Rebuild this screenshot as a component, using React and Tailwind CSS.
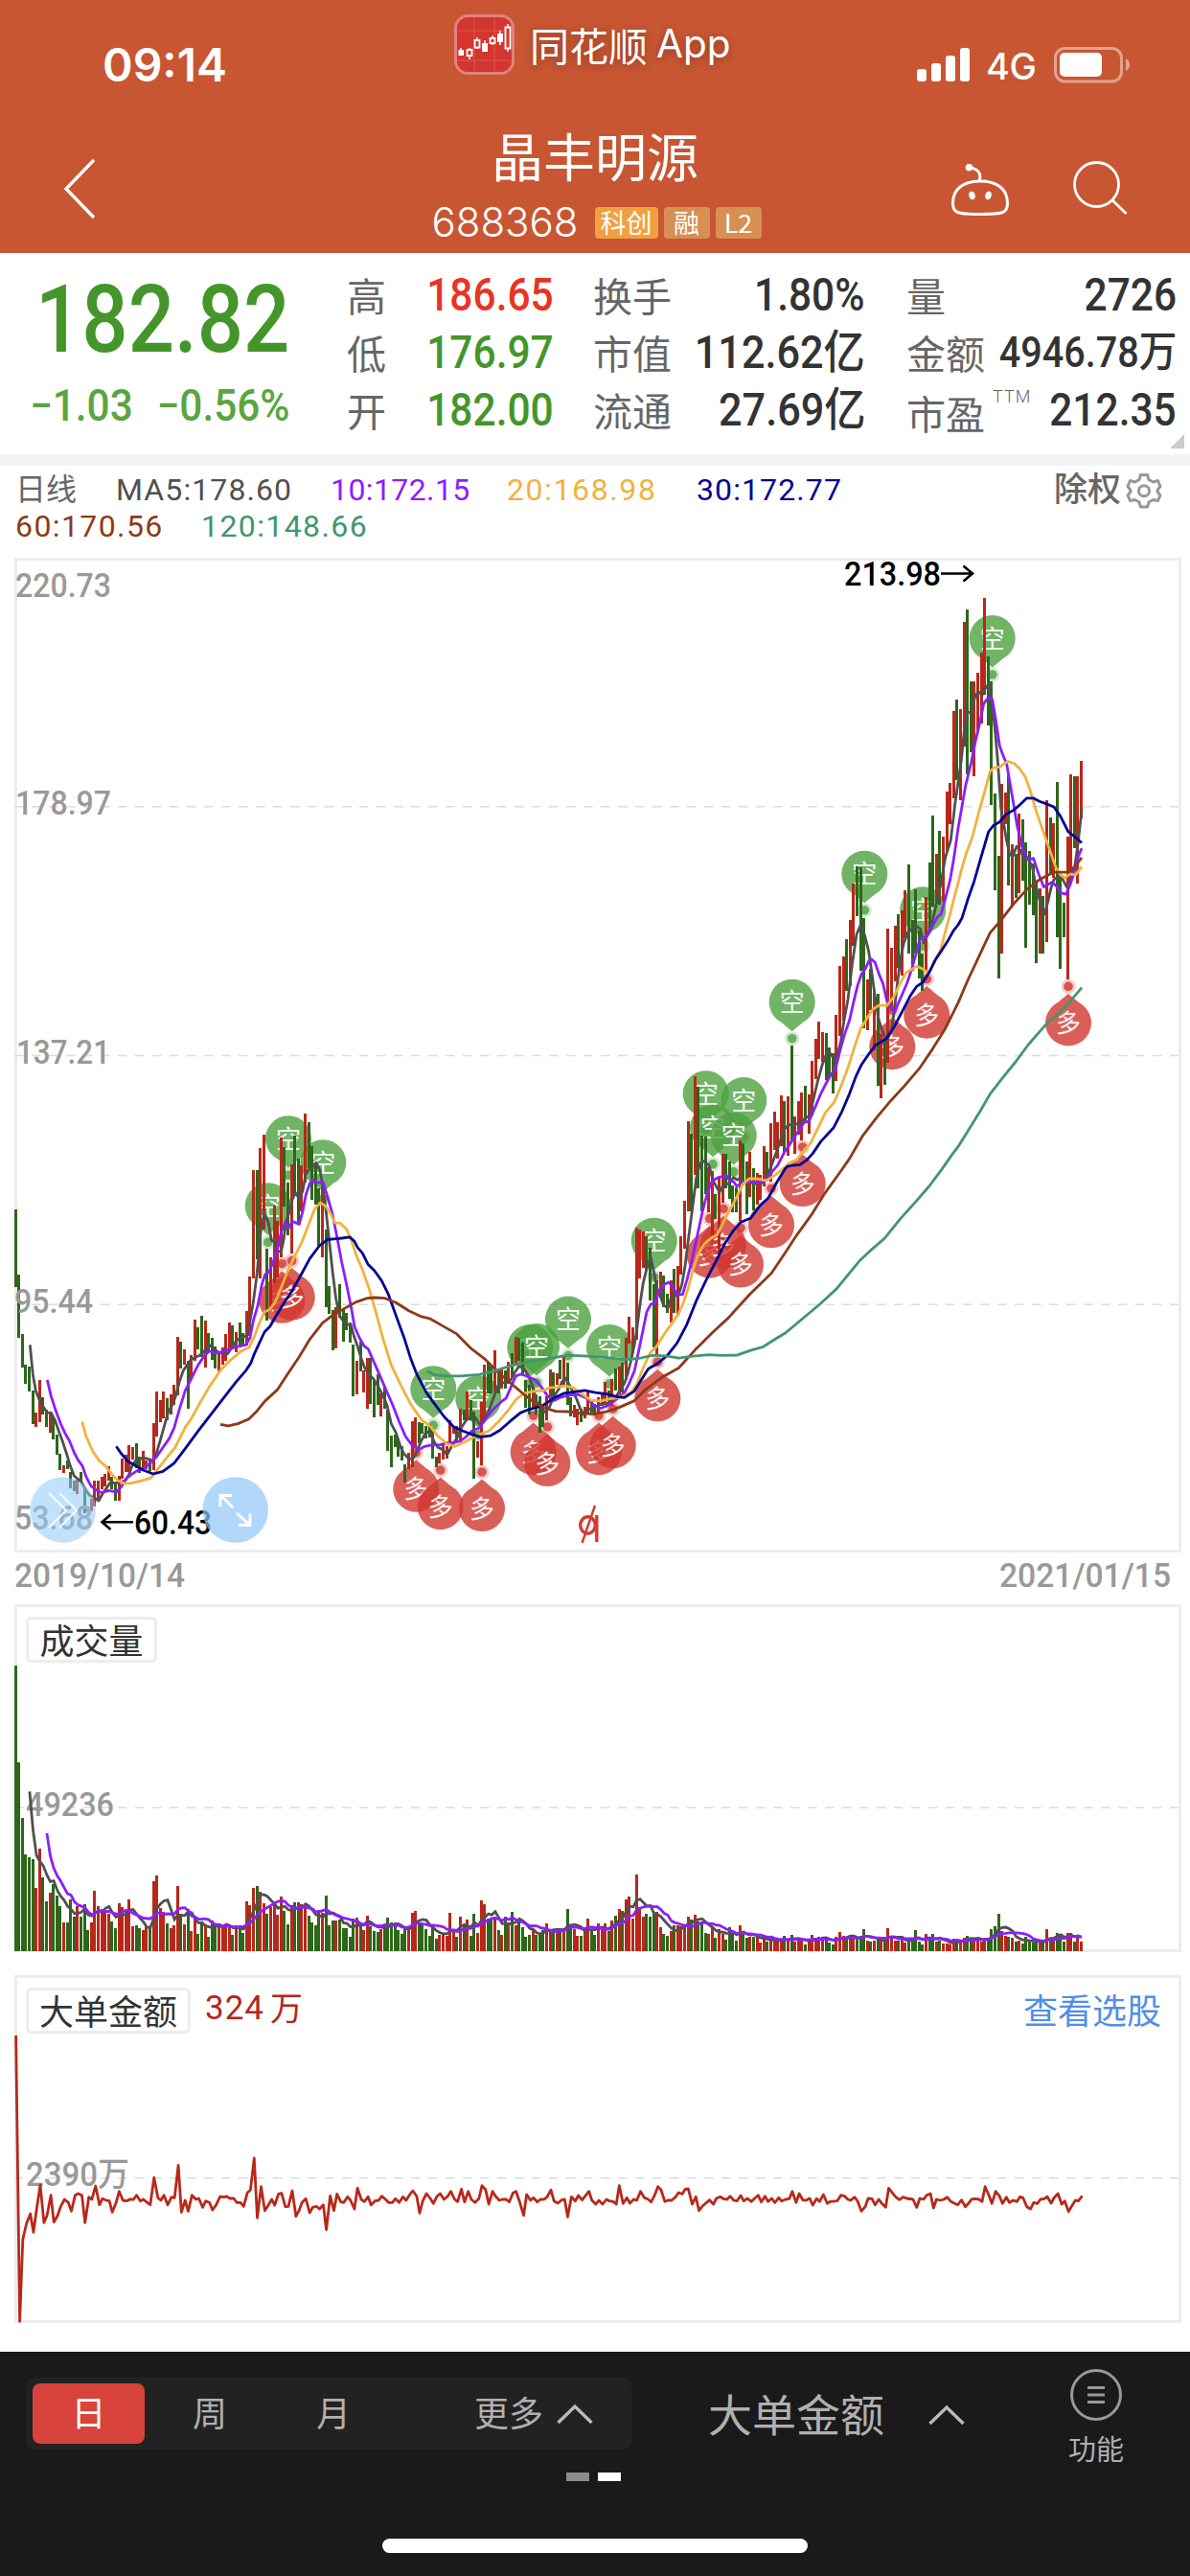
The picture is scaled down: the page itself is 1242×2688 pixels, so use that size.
import React from "react";

const CJK = "font-['Noto_Sans_CJK_SC',sans-serif]";
const DIN = "font-[Roboto,'Noto_Sans_CJK_SC',sans-serif]";
const RED = "#b8281a";
const GREEN = "#2c671a";
const STEP = 3.6;

// Each price segment: vertical origin, vertical scale, then colour + high,low per session.
const PRICE_SEGMENTS = [
  [1080, 2.6133, `g476,686 g653,826 g815,907 g899,950 g905,971 g969,1061 r1030,1069 r941,1057 g988,1034 g1022,1069
  r1030,1085 g1040,1103 g1090,1144 g1142,1186 r1173,1193 g1160,1184 g1192,1235 g1215,1243 r1213,1251 g1192,1220
  g1240,1303 g1285,1300 r1265,1300 r1215,1285 r1215,1265 r1205,1238 r1197,1230 r1177,1215 g1205,1240 g1222,1269
  r1202,1270 r1155,1210 r1145,1192 r1119,1192 r1124,1158 g1113,1180 g1150,1193 r1134,1180 r1160,1185 g1160,1188
  r1058,1186 r972,1095 r996,1055 r972,1045 g990,1050 r980,1034 r954,1010 r823,983 g836,909 r857,898
  g889,1018 r873,940 r776,889 g797,857 g766,878 r779,907 g813,865 g826,885 g850,909 r870,918
  r853,899 r815,889 r784,860 g792,852 r810,866 g784,853 g813,850 r753,848 r659,820 r368,664
  g368,612 r308,664 r272,530 g583,779 r605,750 r465,677 r507,661 r280,605 g306,468 g402,546
  r353,597 g274,440 g337,515 r355,480 r214,402 g238,363 g303,449 g350,463 g418,576 r410,606
  g530,742 g685,760 g750,860 r742,855 g679,770 g750,836 g758,805 g790,839 g844,985 r889,980
  g836,917 r915,975 r881,1019 g881,1007 g940,1043 g925,1009 r978,1040 g960,1019 g1023,1134 g1092,1179
  g1090,1124 g1100,1150 g1120,1160 g1171,1220 r1139,1185 r1052,1179 r1043,1124 g1056,1113 g1058,1087 g1065,1100
  g1060,1098 g1075,1155 g1150,1179 r1139,1168 r1115,1158 r1120,1155 r1050,1115 r1065,1087 g1065,1110 r1019,1110
  g1021,1050 r972,1047 g996,1050 g1027,1210 r1107,1152 r1001,1173 r899,1055 g892,977 g905,977 r860,972
  g915,977 r912,964 g915,964 r891,950 g868,935 r823,898 g826,889 g839,927 g940,1017 g955,1034
  r958,1015 g980,1034 g985,1085 g1005,1069 r985,1051 r912,1000 g920,995 r922,955 g886,938 r878,960
  g894,1008 g988,1040 r1009,1042 r1020,1064 g1020,1057 r1015,1045 r975,1034 g995,1030 g1005,1033 r988,1030
  r980,1012 r946,1005 g970,1000 r938,1012 g909,970 r903,980 g894,974 r826,940 r768,841 r797,868
  r525,830 r530,664 r536,635 g549,640 g580,724 g679,852 r668,870 r645,715 g656,742 g706,758
  r669,784 g638,758 r630,766 r549,653 r452,583 r235,481 g269,480 r112,382 g141,418 g274,480
  g277,434 r360,484 r371,546 g434,502 r390,610 r324,457 g324,418 g345,447 g410,483 g415,483
  r287,507 g294,410 g345,489 r319,442 g363,478 r376,463 r382,450 r303,413 g319,395 r240,400
  r209,314 r238,337 r165,303 g180,319`],
  [800, 2.8, `r963,1137 g815,1095 r1022,1131 r977,1075 r952,1092 g932,1035 r958,1072 r860,1020 r795,913 r745,854
  r776,862 g778,915 g820,910 g837,955 r725,918 r582,788 r554,742 g504,655 r448,640 r342,524
  g291,437 g293,596 g442,764 r622,769 g590,710 r660,830 g664,932 r780,969 g800,930 r473,865
  r529,715 r465,627 g431,588 r420,610 r361,500 g286,546 g448,595 g358,545 g480,618 g546,655
  r381,600 g280,475 g143,410 r255,400 g188,402 r204,395 r72,245 r48,168`],
  [560, 2.6133, `r476,713 g444,665 r470,719 r233,572 g199,648 g395,588 r395,653 r371,536 r316,510 r167,430
  g327,515 g395,732 g700,964 g870,1204 r674,1137 r698,785 g650,950 r839,1010 g865,985 r755,972
  g770,938 g834,1120 g857,1003 g890,1032 g940,1162 r960,1137 g980,1137 r719,1105 g766,920 r781,930
  g669,1092 g920,1178 g998,1092 r818,1207 r648,940 g653,850 r653,946 r612,768`],
];

const candles = PRICE_SEGMENTS.flatMap(([oy, sy, data]) =>
  data.trim().split(/\s+/).map((t) => {
    const [hi, lo] = t.slice(1).split(",").map(Number);
    return { up: t[0] === "r", top: oy + hi / sy, bottom: oy + lo / sy };
  })
).map((c, i) => ({ ...c, x: 15 + Math.floor(STEP * i + 1e-6) }));

// Plot frames: horizontal origin, vertical origin, vertical scale.
const FRAMES = { a: [0, 1080, 2.6133], b: [400, 1080, 2.6133], c: [640, 800, 2.8], d: [840, 560, 2.6133] };

function toPoints(parts) {
  return parts
    .map(([key, s]) => {
      const [ox, oy, sy] = FRAMES[key];
      return s
        .trim()
        .split(/,\s*/)
        .map((p) => {
          const [x, y] = p.trim().split(" ").map(Number);
          return `${(ox + x / 3).toFixed(1)},${(oy + y / sy).toFixed(1)}`;
        })
        .join(" ");
    })
    .join(" ");
}

const AVERAGES = [
  { color: "#505050", parts: [
    ["a", "94 845, 103 925, 112 970, 121 990, 134 1012, 148 1030, 160 1030, 172 1050, 184 1080, 196 1108, 208 1140, 220 1175, 232 1202, 245 1212, 257 1222, 268 1240, 280 1255, 294 1262, 309 1270, 322 1250, 334 1235, 346 1220, 360 1222, 376 1220, 392 1215, 403 1200, 415 1172, 427 1158, 440 1155, 457 1154, 470 1158, 480 1160, 490 1140, 502 1105, 514 1068, 526 1030, 540 1008, 550 985, 562 945, 574 915, 586 900, 598 885, 610 880, 622 875, 634 868, 655 845, 668 855, 685 866, 700 868, 712 870, 724 855, 739 835, 755 824, 772 820, 781 790, 793 730, 805 650, 817 530, 829 488, 840 510, 850 560, 862 565, 870 588, 880 592, 888 560, 895 510, 905 485, 915 450, 925 430, 937 446, 948 425, 957 380, 967 368, 980 358, 990 348, 1002 370, 1012 420, 1022 490, 1032 570, 1042 650, 1052 720, 1063 765, 1075 780, 1085 790, 1098 788, 1108 820, 1120 850, 1130 880, 1142 908, 1155 925, 1170 938, 1185 960, 1200 985, 1212 1010, 1225 1060, 1240 1085, 1255 1125, 1265 1142, 1280 1155, 1290 1157, 1300 1147"],
    ["b", "110 1125, 120 1105, 135 1080, 150 1090, 160 1110, 172 1125, 185 1130, 200 1145, 215 1120, 230 1100, 245 1070, 260 1050, 275 1042, 288 1043, 300 1060, 315 1055, 330 1025, 345 990, 358 960, 370 948, 385 948, 400 940, 412 920, 424 905, 436 904, 448 920, 460 940, 470 965, 480 1000, 490 1018, 505 1028, 520 1015, 535 985, 550 965, 560 945, 570 935, 580 950, 592 970, 605 992, 617 1020, 628 1035, 640 1022, 655 1018, 670 1012, 685 1005, 700 1005, 715 1000, 727 990, 740 970, 755 950, 765 925, 775 890, 785 850, 793 810, 803 740, 813 680, 824 640, 837 605, 847 645, 857 690, 867 710, 878 738, 892 743, 900 720, 912 712, 925 708, 935 680, 945 630, 955 560, 967 480, 980 390, 992 350, 1005 344, 1020 356, 1032 395, 1042 412, 1053 428, 1063 412, 1075 408, 1087 400, 1097 388, 1107 395, 1117 392, 1130 403, 1145 400, 1160 405, 1172 405, 1190 403, 1205 380, 1220 345, 1235 310, 1248 275, 1257 255"],
    ["c", "550 1047, 565 1045, 580 1043, 600 1028, 613 1020, 625 980, 640 920, 655 870, 668 838, 680 838, 693 856, 703 840, 713 800, 722 745, 735 680, 748 580, 762 490, 775 462, 788 495, 800 540, 808 590, 818 660, 830 735, 840 765, 855 800, 870 775, 880 715, 890 630, 900 560, 910 515, 922 485, 935 475, 950 466, 962 475, 972 514, 985 492, 1000 450, 1012 400, 1025 345, 1040 265, 1057 215, 1070 110, 1080 45"],
    ["d", "490 610, 500 520, 510 480, 522 478, 533 435, 543 422, 555 432, 566 412, 576 402, 585 440, 595 520, 604 610, 614 740, 622 780, 632 830, 642 868, 652 870, 663 845, 675 855, 688 880, 700 880, 712 900, 722 945, 735 990, 750 1030, 760 1000, 770 960, 780 935, 795 925, 808 935, 820 955, 832 940, 845 900, 855 840, 867 743"],
  ] },
  { color: "#8c1eff", parts: [
    ["a", "148 940, 160 985, 175 1025, 190 1060, 205 1088, 218 1108, 232 1138, 245 1160, 258 1175, 270 1205, 285 1230, 300 1240, 318 1248, 340 1242, 365 1246, 380 1232, 395 1210, 412 1198, 430 1188, 450 1182, 470 1168, 490 1150, 510 1125, 530 1100, 545 1072, 562 1020, 580 970, 600 935, 620 900, 640 875, 655 862, 680 868, 700 862, 720 856, 740 850, 770 845, 783 825, 793 780, 808 735, 820 680, 830 653, 843 645, 855 620, 870 580, 880 540, 892 512, 905 525, 915 508, 937 516, 948 480, 958 435, 970 405, 980 395, 992 403, 1012 402, 1025 440, 1040 485, 1055 550, 1070 620, 1085 680, 1100 745, 1110 795, 1125 825, 1140 848, 1153 856, 1170 890, 1190 930, 1210 970, 1230 1010, 1250 1055, 1270 1095, 1290 1118"],
    ["b", "112 1130, 130 1122, 150 1118, 175 1118, 200 1112, 220 1112, 240 1108, 260 1095, 280 1078, 300 1072, 320 1048, 345 1020, 370 1000, 385 990, 400 960, 415 930, 430 925, 450 930, 475 940, 495 960, 515 985, 535 997, 555 988, 580 982, 610 980, 640 992, 660 1010, 680 1018, 705 1010, 735 990, 755 975, 770 950, 787 915, 800 860, 812 810, 825 755, 837 735, 850 730, 865 700, 880 680, 893 674, 905 685, 920 708, 937 708, 950 670, 965 620, 980 560, 1000 480, 1015 430, 1030 398, 1050 388, 1075 383, 1085 398, 1097 400, 1107 412, 1125 402, 1150 400, 1190 402, 1205 390, 1220 370, 1235 355, 1257 318"],
    ["c", "550 1108, 565 1085, 580 1065, 597 1040, 613 1036, 630 1000, 650 955, 675 910, 697 880, 710 830, 725 780, 740 740, 752 690, 765 640, 778 605, 790 590, 800 568, 808 562, 820 572, 832 605, 845 635, 857 685, 870 705, 882 715, 893 690, 905 665, 920 632, 935 590, 950 540, 960 505, 975 500, 990 485, 1003 460, 1015 440, 1027 430, 1040 385, 1055 330, 1067 265, 1080 180"],
    ["d", "492 735, 503 680, 520 620, 535 555, 550 500, 560 455, 575 438, 587 445, 598 500, 610 570, 620 595, 632 620, 640 660, 652 720, 665 790, 680 845, 692 870, 703 880, 716 877, 730 915, 748 955, 762 948, 775 942, 790 955, 803 972, 818 975, 830 950, 842 920, 855 875, 867 850"],
  ] },
  { color: "#f1b23e", parts: [
    ["a", "257 1055, 270 1095, 290 1135, 310 1160, 330 1175, 350 1198, 370 1215, 390 1223, 410 1222, 440 1216, 472 1208, 490 1188, 520 1155, 548 1125, 580 1070, 600 1045, 625 1005, 655 960, 690 915, 720 888, 755 862, 780 852, 795 825, 810 790, 828 755, 845 748, 862 728, 880 690, 900 645, 920 608, 945 565, 965 520, 985 475, 1003 457, 1020 467, 1035 487, 1048 512, 1065 513, 1085 530, 1100 560, 1115 600, 1135 640, 1155 690, 1175 750, 1200 830, 1225 900, 1255 955, 1285 1005, 1320 1050"],
    ["b", "145 1065, 170 1093, 200 1115, 225 1122, 250 1112, 275 1100, 300 1090, 330 1080, 360 1055, 390 1025, 415 995, 440 977, 470 972, 500 970, 520 962, 545 960, 570 957, 595 962, 620 978, 650 996, 680 998, 710 992, 740 988, 775 975, 795 950, 815 905, 835 868, 855 850, 880 815, 905 785, 925 760, 940 730, 955 690, 970 640, 985 600, 1005 570, 1025 555, 1045 545, 1060 520, 1080 485, 1105 445, 1125 408, 1145 392, 1170 392, 1200 397, 1230 380, 1258 360"],
    ["c", "550 1158, 575 1148, 600 1118, 618 1100, 640 1058, 665 1010, 692 980, 715 930, 735 880, 755 820, 775 765, 795 735, 812 710, 832 697, 857 698, 880 670, 900 630, 917 602, 935 592, 952 583, 967 590, 980 598, 990 598, 1005 570, 1025 535, 1042 475, 1055 430, 1067 385, 1080 340"],
    ["d", "490 910, 505 865, 525 818, 545 750, 565 690, 580 640, 592 630, 610 628, 625 618, 637 613, 655 618, 672 632, 690 655, 705 690, 725 750, 745 800, 765 850, 785 900, 800 922, 815 930, 830 920, 848 922, 867 900"],
  ] },
  { color: "#060694", parts: [
    ["a", "364 1122, 380 1142, 400 1162, 425 1175, 450 1187, 480 1197, 510 1190, 545 1168, 580 1128, 620 1080, 660 1035, 700 990, 740 945, 770 915, 785 895, 797 868, 812 840, 828 810, 845 795, 865 765, 890 730, 915 697, 945 650, 970 610, 1000 575, 1025 558, 1045 556, 1070 554, 1095 551, 1110 563, 1120 580, 1135 595, 1152 625, 1172 642, 1195 670, 1215 705, 1240 765, 1265 825, 1285 880, 1305 925, 1320 950"],
    ["b", "135 975, 160 1005, 190 1040, 220 1068, 250 1080, 280 1090, 305 1096, 335 1093, 365 1078, 395 1055, 430 1030, 460 1020, 500 1010, 535 990, 565 977, 600 973, 630 969, 665 975, 700 979, 730 986, 755 989, 785 972, 805 945, 830 910, 860 895, 890 873, 920 840, 950 790, 980 725, 1010 670, 1040 620, 1070 568, 1095 535, 1120 510, 1150 500, 1180 465, 1205 445, 1230 405, 1258 365"],
    ["c", "545 1168, 560 1165, 585 1163, 605 1150, 625 1130, 650 1095, 690 1055, 715 1010, 740 955, 760 905, 778 870, 800 840, 820 815, 855 795, 880 760, 905 715, 930 670, 950 642, 970 630, 990 600, 1010 562, 1030 535, 1050 505, 1065 480, 1080 462"],
    ["d", "492 1040, 510 990, 530 940, 550 880, 575 805, 590 788, 610 778, 630 757, 655 745, 675 730, 695 713, 715 713, 735 722, 755 728, 780 737, 800 762, 825 805, 845 818, 867 835"],
  ] },
  { color: "#8c3a18", parts: [
    ["a", "690 1062, 715 1066, 745 1060, 780 1047, 805 1025, 830 998, 868 968, 900 925, 935 880, 970 830, 1010 785, 1045 762, 1080 745, 1115 728, 1150 718, 1175 716, 1205 718, 1240 730, 1280 752, 1320 768"],
    ["b", "145 773, 185 793, 230 815, 275 855, 320 885, 360 920, 400 950, 440 980, 470 1000, 505 1017, 540 1026, 580 1027, 620 1032, 660 1034, 700 1027, 740 1015, 785 998, 820 968, 870 935, 925 908, 975 860, 1030 812, 1080 772, 1150 705, 1215 650, 1260 592"],
    ["c", "575 1368, 620 1310, 660 1250, 710 1185, 740 1145, 780 1080, 825 1025, 870 975, 910 935, 960 880, 1000 825, 1040 765, 1080 690"],
    ["d", "510 1210, 545 1145, 580 1080, 615 1045, 655 1000, 695 962, 735 935, 780 915, 825 915, 845 900, 867 875"],
  ] },
  { color: "#42966f", parts: [
    ["b", "137 916, 160 927, 200 930, 240 930, 300 926, 340 918, 400 902, 460 890, 520 882, 580 873, 640 876, 700 880, 760 885, 800 882, 845 873, 890 876, 925 881, 970 876, 1020 872, 1060 874, 1107 873, 1150 860, 1190 850, 1230 828, 1260 812"],
    ["c", "650 1568, 700 1525, 735 1485, 770 1445, 810 1410, 850 1378, 900 1320, 950 1268, 990 1225, 1030 1175, 1060 1135, 1080 1110"],
    ["d", "548 1568, 580 1520, 620 1475, 660 1432, 700 1385, 750 1335, 800 1295, 830 1268, 867 1230"],
  ] },
];

const SHORTS = [[301, 1188.3], [279.7, 1258.3], [337.3, 1213.2], [452.3, 1449.3], [499.3, 1459.2], [553.3, 1406], [560, 1405], [593, 1376.6], [636, 1406], [682.7, 1294.7], [736.7, 1141.2], [776.3, 1148.1], [744, 1176.8], [765.7, 1184.9], [826.7, 1045.7], [902.3, 911.8], [963.3, 949.3], [1035.7, 666]];
const LONGS = [[294.3, 1356.7], [304.7, 1353.6], [434.3, 1553.7], [459.7, 1572.1], [503, 1574], [556.7, 1515.1], [571.3, 1527], [625, 1515.1], [639.7, 1508.2], [686.3, 1459.2], [740.7, 1309.6], [755, 1299.3], [773, 1319.5], [805, 1278.2], [837.7, 1235], [931.3, 1092.1], [967.3, 1059.6], [1115, 1067.4]];

const VOLUME_TOPS = `234 537 711 825 834 840 930 807 897 972 945 918 954 987 1038 1038 966 1020 987 1020 981 1062 1038 939 987 1000 1005 1010 1035 1056
978 990 1005 966 1050 1047 1056 1062 1050 1055 909 891 993 1005 1041 1056 1047 924 1010 1044 996 1065 1020 1074 1038 1045 1083 1032 1045 1045
1050 1048 1052 1077 1047 1047 1071 972 984 930 924 942 978 1011 990 975 1014 957 1002 1044 984 975 975 981 985 1017 1038 1047 1000 1007
954 1047 1032 1032 1030 1056 1056 1083 1025 1023 1038 1062 1017 1050 1065 1068 1059 1044 1023 1038 1047 1062 1074 1060 1050 1008 1002 1040 1045 1059
1080 1047 1089 1077 1075 1080 1008 1068 1083 1020 1047 1029 1080 1011 1071 969 981 1025 1025 1020 1062 1077 1020 1038 1005 1047 1025 1053 1083 1077
1062 1077 1072 1062 1041 1068 1062 1068 1062 1056 996 1050 1059 1080 1080 1060 1026 1060 1077 1041 1062 1041 1065 1032 1017 996 1002 966 957 1026
888 990 1020 1011 1020 1008 1005 1053 1074 1080 1065 1047 1047 1050 1045 1020 1029 1014 1035 1035 1071 1074 1050 1086 1059 1074 1092 1053 1070 1095
1047 1075 1086 1083 1083 1080 1101 1090 1098 1090 1093 1098 1095 1080 1095 1077 1098 1090 1092 1107 1095 1077 1095 1083 1083 1090 1101 1107 1083 1068
1080 1085 1085 1085 1092 1080 1059 1095 1098 1095 1090 1092 1090 1056 1085 1095 1095 1090 1101 1095 1090 1062 1098 1107 1074 1092 1074 1098 1095 1104
1104 1107 1090 1095 1095 1086 1080 1085 1098 1088 1098 1088 1085 1059 1050 1011 1065 1080 1083 1086 1098 1095 1104 1083 1098 1101 1098 1101 1098 1059
1085 1092 1071 1075 1098 1071 1071 1098 1080 1098`.trim().split(/\s+/).map((t) => 1660 + Number(t) / 3);

function movingAverage(values, n) {
  const out = [];
  for (let i = n - 1; i < values.length; i++) {
    let sum = 0;
    for (let k = 0; k < n; k++) sum += values[i - k];
    out.push(`${(16.5 + STEP * i).toFixed(1)},${(sum / n).toFixed(1)}`);
  }
  return out.join(" ");
}

const AMOUNT = `21 222, 26 1117, 30 860, 35 810, 40 780, 44 838, 48 770, 53 690, 58 808, 62 785, 67 722, 71 806, 76 785, 80 757, 85 735, 90 745, 94 772, 99 722, 103 717, 108 722, 112 808, 117 728, 121 735, 126 693, 131 752, 135 733, 140 738, 144 740, 148 775, 153 745, 157 710, 162 738, 167 740, 171 735, 176 735, 180 722, 185 740, 189 735, 194 745, 198 752, 203 667, 208 730, 212 738, 216 722, 221 752, 226 728, 230 730, 235 628, 239 775, 244 738, 248 772, 253 722, 258 735, 262 732, 267 760, 271 740, 276 745, 280 768, 285 752, 290 726, 294 728, 299 726, 303 732, 308 732, 312 745, 317 745, 321 757, 326 714, 330 706, 335 606, 339 793, 344 695, 349 770, 353 755, 358 735, 362 753, 367 718, 371 716, 376 758, 380 757, 385 708, 390 788, 394 770, 398 745, 403 733, 408 777, 412 760, 417 757, 421 765, 426 752, 430 830, 435 724, 440 770, 444 718, 449 742, 453 745, 458 727, 462 738, 467 765, 471 700, 476 735, 480 742, 485 727, 489 752, 494 740, 499 738, 503 725, 508 735, 512 745, 517 745, 521 733, 526 745, 531 727, 535 738, 540 720, 544 708, 549 725, 553 778, 557 740, 562 717, 567 732, 571 748, 576 725, 580 717, 585 735, 590 725, 594 710, 599 735, 603 742, 608 703, 612 743, 617 710, 621 735, 626 745, 631 733, 635 692, 640 705, 644 750, 649 710, 653 725, 658 738, 662 735, 667 735, 671 743, 676 715, 680 710, 685 745, 690 785, 694 720, 699 738, 703 730, 708 743, 712 735, 717 735, 721 727, 726 706, 730 740, 735 747, 740 737, 744 735, 748 790, 753 727, 758 740, 762 723, 767 737, 771 725, 776 710, 780 738, 785 750, 789 738, 794 750, 799 735, 803 740, 808 742, 812 750, 816 692, 821 748, 826 730, 830 747, 835 735, 839 738, 844 710, 849 730, 853 733, 858 743, 862 725, 867 695, 871 705, 876 742, 880 738, 885 738, 890 728, 894 714, 899 718, 903 703, 907 702, 912 750, 917 727, 921 770, 926 755, 931 745, 935 737, 940 750, 944 732, 949 727, 953 733, 958 735, 962 725, 967 738, 971 740, 976 723, 980 740, 985 732, 990 742, 994 733, 999 722, 1003 743, 1008 725, 1012 742, 1017 732, 1021 745, 1026 730, 1030 740, 1035 735, 1040 733, 1044 710, 1049 745, 1053 717, 1058 737, 1062 738, 1067 732, 1071 753, 1076 733, 1080 742, 1085 720, 1090 748, 1094 742, 1103 740, 1108 722, 1113 725, 1117 735, 1121 738, 1126 728, 1130 740, 1135 772, 1140 758, 1144 732, 1149 733, 1153 752, 1158 735, 1162 748, 1167 760, 1171 700, 1176 715, 1180 727, 1185 736, 1190 728, 1195 732, 1203 735, 1208 760, 1212 732, 1217 735, 1221 722, 1226 717, 1230 762, 1234 735, 1239 738, 1244 735, 1248 728, 1253 742, 1258 748, 1262 752, 1267 737, 1272 758, 1276 748, 1280 735, 1285 733, 1290 735, 1294 742, 1298 695, 1303 722, 1307 748, 1312 710, 1317 725, 1321 748, 1326 728, 1330 745, 1335 738, 1340 742, 1344 727, 1348 730, 1353 758, 1358 765, 1362 745, 1367 748, 1371 735, 1376 733, 1380 727, 1385 747, 1389 730, 1394 717, 1399 750, 1403 740, 1408 773, 1412 757, 1417 738, 1421 740, 1426 724`
  .split(", ")
  .map((p) => {
    const [x, y] = p.split(" ").map(Number);
    return `${(x / 1.2625).toFixed(1)},${(2050 + y / 3).toFixed(1)}`;
  })
  .join(" ");

function Panel({ top, bottom }) {
  return <rect x="16.5" y={top + 1.5} width="1215" height={bottom - top - 3} fill="none" stroke="#ededed" strokeWidth="3" />;
}

function Grid({ y }) {
  return <line x1="15" x2="1230" y1={y} y2={y} stroke="#dcdcdc" strokeWidth="1.5" strokeDasharray="9.5 8.5" />;
}

function Label({ x, y, w, children, size = 35, fill = "#999", weight = 500 }) {
  return (
    <text x={x} y={y} textLength={w} lengthAdjust="spacingAndGlyphs" fontSize={size} fill={fill} fontWeight={weight} fontFamily="Roboto, 'Noto Sans CJK SC', sans-serif">
      {children}
    </text>
  );
}

function Marker({ x, y, short }) {
  const color = short ? "#4ea240" : "#d23830";
  const d = short ? 1 : -1;
  const edge = y + d * 21.3;
  return (
    <g>
      <g opacity="0.8" fill={color}>
        <path d={`M${x - 11} ${edge}L${x} ${y + d * 30.5}L${x + 11} ${edge}A24 24 0 1 ${short ? 0 : 1} ${x - 11} ${edge}Z`} />
        <circle cx={x} cy={y + d * 38} r="4.8" />
      </g>
      <circle cx={x} cy={y + d * 38} r="7.5" fill={color} opacity="0.25" />
      <text x={x} y={y + 9.5} textAnchor="middle" fontSize="26" fill="#fff" fontFamily="'Noto Sans CJK SC', sans-serif" opacity="0.95">
        {short ? "空" : "多"}
      </text>
    </g>
  );
}

function PriceChart() {
  return (
    <svg className="block h-[1092px] w-[1242px]" viewBox="0 582 1242 1092">
      <Panel top={582} bottom={1620} />
      <Grid y={841.7} />
      <Grid y={1101.5} />
      <Grid y={1361.3} />
      {SHORTS.map(([x, y], i) => <Marker key={i} x={x} y={y} short />)}
      {LONGS.map(([x, y], i) => <Marker key={i} x={x} y={y} />)}
      <g shapeRendering="crispEdges">
        {candles.map((c, i) => <rect key={i} x={c.x} y={c.top} width="3" height={c.bottom - c.top} fill={c.up ? RED : GREEN} />)}
      </g>
      {AVERAGES.map((a) => <polyline key={a.color} points={toPoints(a.parts)} fill="none" stroke={a.color} strokeWidth="2.8" strokeLinejoin="round" />)}
      <Label x={16} y={623} w={100}>220.73</Label>
      <Label x={16} y={850} w={100}>178.97</Label>
      <Label x={17} y={1110} w={98}>137.21</Label>
      <Label x={15} y={1370} w={82}>95.44</Label>
      <Label x={15} y={1596} w={82}>53.68</Label>
      <Label x={15} y={1656} w={178}>2019/10/14</Label>
      <Label x={1043} y={1656} w={179}>2021/01/15</Label>
      <Label x={881} y={611} w={101} fill="#000">213.98</Label>
      <path d="M982 598.5H1014M1005.5 590.5L1015 598.5L1005.5 606.5" fill="none" stroke="#000" strokeWidth="2.6" />
      <Label x={140} y={1601} w={81} fill="#000">60.43</Label>
      <path d="M139 1588.3H107M115.5 1580.5L106.5 1588.3L115.5 1596" fill="none" stroke="#000" strokeWidth="2.6" />
      <circle cx="65.7" cy="1575.5" r="34.3" fill="#90c8fa" opacity="0.55" />
      <path d="M51 1558L69 1576L51 1594M62 1558L80 1576L62 1594" fill="none" stroke="#fff" strokeWidth="2" opacity="0.9" />
      <circle cx="245.7" cy="1575.5" r="34.3" fill="#90c8fa" opacity="0.7" />
      <path d="M243 1573L230 1560M230 1572V1560.5H242M247 1579L261 1591.5M249 1591.5H261V1579.5" fill="none" stroke="#fff" strokeWidth="2.8" />
      <g fill="none" stroke="#d23b32">
        <ellipse cx="613.5" cy="1591.5" rx="7.8" ry="8.8" strokeWidth="3.4" />
        <path d="M622.8 1581V1609" strokeWidth="3.4" />
        <path d="M607.5 1610L621 1571" strokeWidth="2.4" />
      </g>
    </svg>
  );
}

function Tag({ children }) {
  return <div className={`flex h-12 items-center justify-center whitespace-nowrap rounded-md border-[3px] border-[#ededed] px-[11px] pb-[3px] text-[36px] leading-none text-[#333] ${CJK}`}>{children}</div>;
}

function VolumeChart() {
  return (
    <section className="relative h-[387px]">
      <svg className="block h-[387px] w-[1242px]" viewBox="0 1674 1242 387">
        <Panel top={1674} bottom={2037} />
        <Grid y={1886.3} />
        <g shapeRendering="crispEdges">
          {candles.map((c, i) => <rect key={i} x={c.x} y={VOLUME_TOPS[i]} width="3" height={2036 - VOLUME_TOPS[i]} fill={c.up ? RED : GREEN} />)}
        </g>
        <Label x={27} y={1895} w={92}>49236</Label>
        <polyline points={movingAverage(VOLUME_TOPS, 5)} fill="none" stroke="#505050" strokeWidth="2.8" />
        <polyline points={movingAverage(VOLUME_TOPS, 10)} fill="none" stroke="#8c1eff" strokeWidth="2.8" />
      </svg>
      <div className="absolute left-[27px] top-[13px] w-[137px]"><Tag>成交量</Tag></div>
    </section>
  );
}

function AmountChart() {
  return (
    <section className="relative h-[393px]">
      <svg className="block h-[393px] w-[1242px]" viewBox="0 2061 1242 393">
        <Panel top={2061} bottom={2424} />
        <Grid y={2272.7} />
        <Label x={27} y={2281} w={108}>2390万</Label>
        <polyline points={AMOUNT} fill="none" stroke={RED} strokeWidth="2.8" strokeLinejoin="round" />
      </svg>
      <div className="absolute inset-x-0 top-[13px] flex h-12 items-center pl-[27px] pr-[30px]">
        <Tag>大单金额</Tag>
        <span className={`mb-1 ml-[15px] flex items-center text-[35px] tracking-[1px] text-[#b5261b] ${DIN}`}>
          324<span className="ml-[6px] text-[34px]">万</span>
        </span>
        <span className={`mb-1 ml-auto text-[36px] text-[#4f8fe8] ${CJK}`}>查看选股</span>
      </div>
    </section>
  );
}

function StatusBar() {
  return (
    <div className="flex h-[132px] items-start text-white">
      <div className="w-[474px] pl-[107px] pt-[38px] font-[Inter,sans-serif] text-[48px] font-semibold leading-[60px]">09:14</div>
      <svg className="mt-[15px] h-[63px] w-[63px]" viewBox="0 0 63 63">
        <rect x="1.5" y="1.5" width="60" height="60" rx="13" fill="#d5352f" stroke="#e2817d" strokeWidth="3" />
        <path d="M21 3V60M42 3V60M3 17H60M3 48H60" stroke="#dd5650" strokeWidth="1" />
        <path d="M7 35V43M16 35V47M24 24V36M32 27V39M40 22V32M48 17V32M56 10V39" stroke="#fff" strokeWidth="1.5" />
        <path d="M4.5 37H10V43H4.500ZM29 30H35V39H29ZM45 20H51V29H45Z" fill="#fff" />
        <path d="M13.5 37H18.5V43H13.5ZM21.5 27H26.5V34.5H21.5ZM37.5 25H42.5V30H37.5ZM53.5 13.5H58.5V35.5H53.5Z" fill="#d5352f" stroke="#fff" strokeWidth="1.8" />
      </svg>
      <div className={`ml-[16px] flex w-[404px] items-center pt-[16px] text-[41px] leading-[60px] [text-shadow:0_2px_8px_rgba(0,0,0,0.3)] ${CJK}`}>
        同花顺<span className="ml-[9px] font-[Inter,sans-serif] text-[40.5px]">App</span>
      </div>
      <svg className="mt-[49px] h-[38px] w-[56px]" viewBox="957 49 56 38" fill="#fff">
        <rect x="957" y="72" width="10" height="13" rx="3" />
        <rect x="972" y="66" width="10" height="19" rx="3" />
        <rect x="987" y="58" width="10" height="27" rx="3" />
        <rect x="1002" y="50" width="10" height="35" rx="3" />
      </svg>
      <div className="ml-[16px] w-[70px] pt-[39px] font-[Inter,sans-serif] text-[38px] font-medium leading-[60px] tracking-[-0.5px]">4G</div>
      <svg className="mt-[48px] h-[40px] w-[82px]" viewBox="1098 48 82 40">
        <rect x="1100.5" y="50.5" width="69" height="34.5" rx="10" fill="none" stroke="#fff" strokeOpacity="0.45" strokeWidth="3" />
        <rect x="1105" y="55" width="44" height="25" rx="5" fill="#fff" />
        <path d="M1174 61Q1178 63 1178 67.500Q1178 72 1174 74Z" fill="#fff" fillOpacity="0.45" />
      </svg>
    </div>
  );
}

function TitleBar() {
  return (
    <div className="flex h-[132px] items-start text-white">
      <svg className="ml-[60px] mt-[30px] h-[72px] w-[235px]" viewBox="60 162 235 72" fill="none">
        <path d="M98 167L69 197L98 227" stroke="#fff" strokeWidth="3.4" />
      </svg>
      <div className="ml-[54px] flex w-[540px] flex-col items-center">
        <div className={`-mt-[3px] h-[79px] pl-1 text-[54px] leading-[66px] ${CJK}`}>晶丰明源</div>
        <div className="flex h-[48px] items-center pl-[7px]">
          <span className="w-[170px] font-[Inter,sans-serif] text-[42px] font-light leading-[48px]">688368</span>
          <div className={`flex gap-[6px] text-[27px] leading-none ${CJK}`}>
            <span className="flex h-[33px] w-[66px] items-center justify-center rounded bg-[#f2a03f] pb-[2px]">科创</span>
            <span className="flex h-[33px] w-[48px] items-center justify-center rounded bg-[#d88f54] pb-[2px]">融</span>
            <span className="flex h-[33px] w-[48px] items-center justify-center rounded bg-[#d88f54] pb-[2px]">L2</span>
          </div>
        </div>
      </div>
      <svg className="ml-[95px] mt-[30px] h-[72px] w-[200px]" viewBox="984 162 200 72" fill="none" stroke="#fff">
        <path d="M1023 189C1039 189 1051.5 196 1051.5 212C1051.5 222 1048 223.500 1023 223.500C998 223.500 994.5 222 994.5 212C994.5 196 1007 189 1023 189Z" strokeWidth="3" />
        <path d="M1012 175C1020 175.5 1025 181 1022 188.500" strokeWidth="3" />
        <circle cx="1011.5" cy="174.8" r="3.8" fill="#fff" stroke="none" />
        <ellipse cx="1014.5" cy="204" rx="3.2" ry="4.3" fill="#fff" stroke="none" transform="rotate(-15 1014.5 204)" />
        <ellipse cx="1031.5" cy="204" rx="3.2" ry="4.3" fill="#fff" stroke="none" transform="rotate(15 1031.5 204)" />
        <circle cx="1144.5" cy="192.5" r="23" strokeWidth="2.8" />
        <path d="M1160.5 208.5L1175.5 223" strokeWidth="2.8" />
      </svg>
    </div>
  );
}

const QUOTES = [
  { width: "w-[216px]", rows: [["高", "186.65", "text-[#ea3323]"], ["低", "176.97", "text-[#44962b]"], ["开", "182.00", "text-[#44962b]"]] },
  { width: "w-[284px]", rows: [["换手", "1.80%", "text-[#333]"], ["市值", "112.62亿", "text-[#333]"], ["流通", "27.69亿", "text-[#333]"]] },
  { width: "w-[282px]", rows: [["量", "2726", "text-[#333]"], ["金额", "4946.78万", "text-[#333]"], ["市盈", "212.35", "text-[#333]"]] },
];

function QuoteValue({ value, tone }) {
  const stretch = /[亿万]/.test(value) ? "scale-x-[0.9]" : "scale-x-[0.885]";
  const size = value.length > 7 ? "text-[44px]" : "text-[48px]";
  return (
    <span className={`w-0 ${DIN} ${tone}`}>
      <span className={`float-right origin-right whitespace-nowrap font-medium leading-[56px] ${stretch} ${size}`}>{value}</span>
    </span>
  );
}

function QuoteBoard() {
  return (
    <section className="relative flex h-[210px] bg-white pt-[14px]">
      <div className={`w-[362px] text-[#44962b] ${DIN}`}>
        <div className="h-[112px] w-[300px] origin-left translate-x-[37px] scale-x-[0.868] whitespace-nowrap text-[98px] font-medium leading-[112px]">182.82</div>
        <div className="flex h-[60px] origin-left translate-x-[31px] translate-y-[3px] scale-x-[0.92] gap-[27px] whitespace-nowrap text-[46px] font-medium leading-[60px] text-[#5aa53f]">
          <span>−1.03</span>
          <span>−0.56%</span>
        </div>
      </div>
      <div className="flex gap-[42px]">
        {QUOTES.map((col, c) => (
          <div key={c} className={`flex flex-col ${col.width}`}>
            {col.rows.map(([name, value, tone]) => (
              <div key={name} className={`flex h-[60px] items-center justify-between ${c === 1 ? "-translate-x-px" : ""}`}>
                <span className={`whitespace-nowrap text-[41px] leading-[60px] text-[#666] ${CJK} ${name === "市盈" ? "translate-y-[2px]" : "-translate-y-px"}`}>
                  {name}
                  {name === "市盈" && <sup className="ml-[8px] inline-block -translate-y-[19px] font-[Roboto,sans-serif] text-[18px] font-light leading-none tracking-[1px]">TTM</sup>}
                </span>
                <QuoteValue value={value} tone={tone} />
              </div>
            ))}
          </div>
        ))}
      </div>
      <svg className="absolute bottom-[6px] right-[6px] h-[15px] w-[15px]" viewBox="0 0 15 15"><path d="M15 0V15H0Z" fill="#ccc" /></svg>
    </section>
  );
}

function AverageLegend() {
  return (
    <section className={`flex h-[96px] bg-white pl-[16px] text-[32px] leading-[38px] ${DIN}`}>
      <div className="w-[1084px] whitespace-nowrap pt-[6px]">
        <div className="flex h-[38px]">
          <span className="w-[105px] text-[32px] text-[#666]">日线</span>
          <span className="w-[224px] tracking-[1.1px] text-[#505050]">MA5:178.60</span>
          <span className="w-[184px] tracking-[0.4px] text-[#8c1eff]">10:172.15</span>
          <span className="w-[198px] tracking-[1.6px] text-[#f1b23e]">20:168.98</span>
          <span className="tracking-[1.1px] text-[#060694]">30:172.77</span>
        </div>
        <div className="flex h-[38px]">
          <span className="w-[194px] tracking-[1.4px] text-[#8c3a18]">60:170.56</span>
          <span className="tracking-[1.4px] text-[#42966f]">120:148.66</span>
        </div>
      </div>
      <div className="flex h-[52px] items-center text-[35px] font-medium text-[#666]">
        除权
        <svg className="ml-[5px] h-[38px] w-[38px]" viewBox="0 0 38 38" fill="none" stroke="#999" strokeWidth="3" strokeLinejoin="round">
          <path d="M15.5 2.5H22.5L24 7.5L28.5 10L33.5 8.5L36 14.5L33 18.5V20L36 24L33.5 29.5L28.5 28.5L24 31L22.5 36H15.5L14 31L9.5 28.5L4.5 29.5L2 24L5 20V18.5L2 14.5L4.5 8.500L9.5 10L14 7.5Z" />
          <circle cx="19" cy="19.3" r="5.5" />
        </svg>
      </div>
    </section>
  );
}

function Chevron() {
  return <svg className="h-[22px] w-[38px]" viewBox="0 0 38 22" fill="none"><path d="M1.5 20L19 3L36.5 20" stroke="#bbb" strokeWidth="3.4" /></svg>;
}

function BottomBar() {
  return (
    <footer className={`flex h-[234px] flex-col bg-[#1a1a1a] text-[#b0b0b0] ${CJK}`}>
      <div className="flex h-[126px] items-start">
        <div className="ml-[27px] mt-[27px] flex h-[75px] w-[632px] items-center rounded-lg bg-[#222] pl-[7px] text-[36px] leading-none">
          <div className="flex h-[63px] w-[117px] items-center justify-center rounded-lg bg-[#d8433b] pb-[5px] text-white">日</div>
          <div className="flex w-[136px] justify-center pb-[5px]">周</div>
          <div className="flex w-[122px] justify-center pb-[5px]">月</div>
          <div className="ml-[86px] flex items-center"><span className="pb-[5px]">更多</span><span className="ml-[14px]"><Chevron /></span></div>
        </div>
        <div className="ml-[80px] mt-[36px] flex h-[60px] w-[376px] items-center text-[46px] leading-none">
          <span className="pb-[6px]">大单金额</span><span className="ml-[46px]"><Chevron /></span>
        </div>
        <div className="flex w-[58px] flex-col items-center pt-[17px]">
          <svg className="h-[56px] w-[56px]" viewBox="0 0 56 56" fill="none" stroke="#999" strokeWidth="3">
            <circle cx="28" cy="28" r="25.5" />
            <path d="M19 20.5H37M19 28H37M19 35.5H37" />
          </svg>
          <span className="mt-[10px] whitespace-nowrap text-[29px] leading-[34px]">功能</span>
        </div>
      </div>
      <div className="flex justify-center gap-[9px] pr-[3px]">
        <span className="h-[9px] w-[24px] bg-[#8c8c8c]" />
        <span className="h-[9px] w-[24px] bg-white" />
      </div>
      <div className="mx-auto mt-[60px] h-[15px] w-[444px] rounded-full bg-white" />
    </footer>
  );
}

export default function App() {
  return (
    <main className="flex h-[2688px] w-[1242px] flex-col overflow-hidden bg-white">
      <header className="h-[264px] bg-[#c85632]">
        <StatusBar />
        <TitleBar />
      </header>
      <QuoteBoard />
      <div className="h-3 bg-[#f4f4f4]" />
      <AverageLegend />
      <PriceChart />
      <VolumeChart />
      <AmountChart />
      <BottomBar />
    </main>
  );
}
